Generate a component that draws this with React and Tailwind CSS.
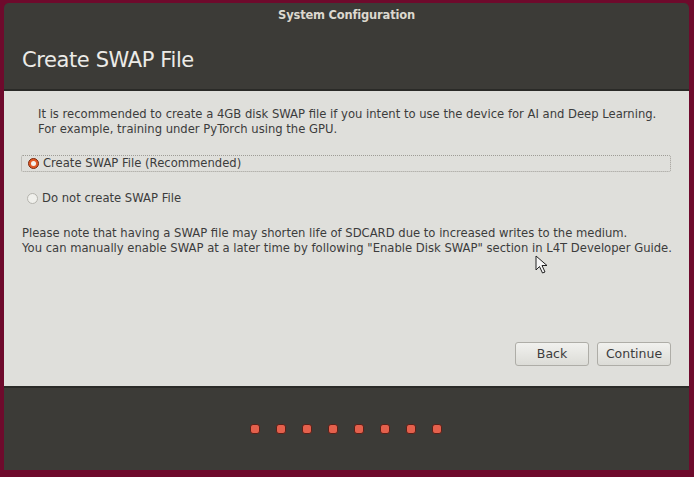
const dots = [0, 1, 2, 3, 4, 5, 6, 7];

function Cursor() {
  return (
    <svg width="14" height="20" viewBox="0 0 14 20" className="absolute left-[535px] top-[255px]">
      <path d="M1 1 L1 15 L4.5 11.5 L7.5 18 L10 17 L7 10.5 L12 10.5 Z" fill="#f5f5f5" stroke="#222" strokeWidth="1" strokeLinejoin="round" />
    </svg>
  );
}

export default function App() {
  return (
    <div
      className="relative h-[477px] w-[694px] overflow-hidden bg-[#6e0a2c] pl-[4px] pr-[5px] pt-[3px] pb-[7px]"
      style={{ fontFamily: '"DejaVu Sans", "Noto Sans", sans-serif' }}
    >
      <div className="flex h-full flex-col rounded-t-[5px] bg-[#3c3b37]">
        {/* Title bar */}
        <div className="flex h-[26px] items-center justify-center text-[11.5px] font-bold tracking-[-0.2px] text-[#dcd8cf]">
          System Configuration
        </div>

        {/* Header */}
        <div className="flex h-[60px] items-center pl-[18px] pt-[4px]">
          <h1 className="text-[21px] tracking-[-0.4px] text-[#ecebe7]">Create SWAP File</h1>
        </div>

        {/* Content panel */}
        <div className="flex h-[297px] flex-col border-t-2 border-[#2a2a27] bg-[#dfdfdb] pr-[2px] text-[11.6px] text-[#3c3c3c]">
          <div className="mt-[16px] pl-[34px] leading-[15px]">
            <p>It is recommended to create a 4GB disk SWAP file if you intent to use the device for AI and Deep Learning.</p>
            <p>For example, training under PyTorch using the GPU.</p>
          </div>

          <div className="ml-[17px] mr-[16px] mt-[18px] flex h-[17px] items-center gap-[4px] rounded-[2px] border border-dotted border-[#9e9c96] pl-[6px]">
            <span className="flex h-[11px] w-[11px] items-center justify-center rounded-full border border-[#7a2a10] bg-[#e25a26]">
              <span className="h-[5px] w-[5px] rounded-full bg-[#f4f4f0]" />
            </span>
            <span>Create SWAP File (Recommended)</span>
          </div>

          <div className="ml-[17px] mt-[18px] flex h-[17px] items-center gap-[4px] pl-[6px]">
            <span className="h-[11px] w-[11px] rounded-full border border-[#b5b4ae] bg-[#f0f0ec]" />
            <span>Do not create SWAP File</span>
          </div>

          <div className="mt-[19px] pl-[18px] leading-[15px]">
            <p>Please note that having a SWAP file may shorten life of SDCARD due to increased writes to the medium.</p>
            <p>You can manually enable SWAP at a later time by following "Enable Disk SWAP" section in L4T Developer Guide.</p>
          </div>

          <div className="mt-auto mb-[20px] flex justify-end gap-[8px] pr-[16px]">
            <button className="h-[24px] w-[74px] rounded-[3px] border border-[#aeada7] bg-gradient-to-b from-[#f1f1ee] to-[#dcdcd7] text-[12.5px] text-[#3c3c3c]">
              Back
            </button>
            <button className="h-[24px] w-[74px] rounded-[3px] border border-[#aeada7] bg-gradient-to-b from-[#f1f1ee] to-[#dcdcd7] text-[12.5px] text-[#3c3c3c]">
              Continue
            </button>
          </div>
        </div>

        {/* Progress dots */}
        <div className="flex flex-1 items-center justify-center border-t-2 border-[#2a2a27] pr-[1px]">
          <div className="flex gap-[16px]">
            {dots.map((d) => (
              <span
                key={d}
                className="h-[10px] w-[10px] rounded-[3px] border border-[#5a2018] bg-[#e4604c]"
              />
            ))}
          </div>
        </div>
      </div>
      <Cursor />
    </div>
  );
}
